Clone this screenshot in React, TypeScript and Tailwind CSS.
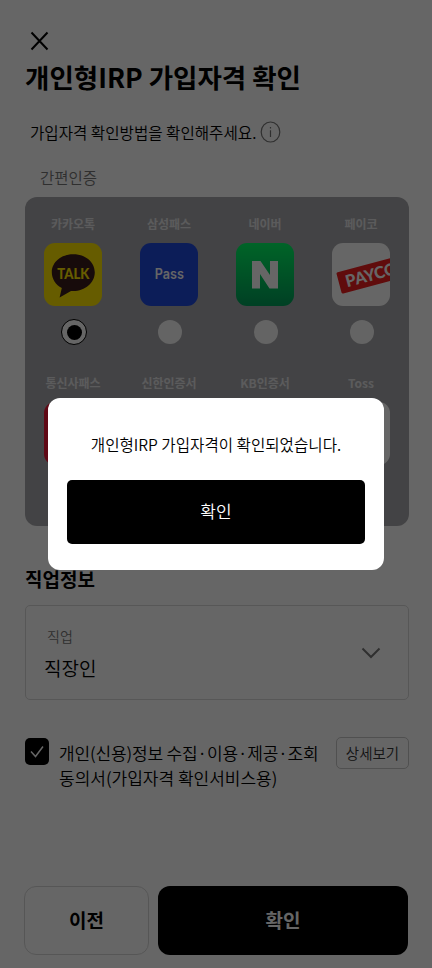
import React, { useState } from 'react';

interface Provider {
  id: string;
  label: string;
  icon: React.ReactNode;
}

const TalkIcon = () => (
  <svg viewBox="0 0 58 63" className="w-[58px] h-[63px]">
    <rect width="58" height="63" fill="#ffe600" />
    <path d="M29.2 11.2C17.3 11.2 7.8 19 7.8 29.2c0 6.700 3.900 12.600 10 15.900L15.600 54.600 27 47.900c0.800 0.100 1.500 0.100 2.200 0.100 12 0 21.600-8.300 21.600-18.800S41.200 11.200 29.200 11.200z" fill="#3b1c1c" />
    <text x="29.300" y="35.500" textAnchor="middle" textLength="32" lengthAdjust="spacingAndGlyphs" fontFamily="Lato, sans-serif" fontWeight="900" fontSize="15.500" fill="#ffe600">TALK</text>
  </svg>
);

const PassIcon = () => (
  <svg viewBox="0 0 58 63" className="w-[58px] h-[63px]">
    <rect width="58" height="63" fill="#2049dc" />
    <text x="29.300" y="36" textAnchor="middle" textLength="29" lengthAdjust="spacingAndGlyphs" fontFamily="Inter, sans-serif" fontWeight="600" fontSize="14" fill="#fff">Pass</text>
  </svg>
);

const NaverIcon = () => (
  <svg viewBox="0 0 58 63" className="w-[58px] h-[63px]">
    <defs>
      <linearGradient id="naver" x1="0" y1="0" x2="0" y2="1">
        <stop offset="0" stopColor="#00fa64" />
        <stop offset="1" stopColor="#00a05a" />
      </linearGradient>
    </defs>
    <rect width="58" height="63" fill="url(#naver)" />
    <path d="M16 18h8.500l9.500 14V18h8v27.500h-8.500L24 31v14.500h-8z" fill="#fff" />
  </svg>
);

const PaycoIcon = () => (
  <svg viewBox="0 0 58 63" className="w-[58px] h-[63px]">
    <rect width="58" height="63" fill="#fff" />
    <g transform="translate(4.200 29.600) rotate(-15)">
      <rect width="70" height="22" rx="1.500" fill="#f02020" />
      <text x="7" y="17" textLength="53" lengthAdjust="spacingAndGlyphs" fontFamily="Lato, sans-serif" fontWeight="900" fontSize="16.500" fill="#fff">PAYCO</text>
    </g>
  </svg>
);

const providers: Provider[] = [
  { id: 'kakao', label: '카카오톡', icon: <TalkIcon /> },
  { id: 'samsung', label: '삼성패스', icon: <PassIcon /> },
  { id: 'naver', label: '네이버', icon: <NaverIcon /> },
  { id: 'payco', label: '페이코', icon: <PaycoIcon /> },
  { id: 'telecom', label: '통신사패스', icon: <div className="h-full bg-[#ee1536]" /> },
  { id: 'shinhan', label: '신한인증서', icon: <div className="h-full bg-[#2049dc]" /> },
  { id: 'kb', label: 'KB인증서', icon: <div className="h-full bg-[#ffcc00]" /> },
  { id: 'toss', label: 'Toss', icon: <div className="h-full bg-white" /> },
];

const App: React.FC = () => {
  const [selected, setSelected] = useState('kakao');
  const [open, setOpen] = useState(true);

  return (
    <div className="relative w-[432px] h-[968px] overflow-hidden bg-white text-black font-[350] font-[family-name:'Noto_Sans_CJK_KR',sans-serif]">
      <main className="flex flex-col h-full pl-[25px] pr-[23px] pt-[30px]">
        <button className="ml-[5px] w-[19px] h-[22px]" aria-label="닫기">
          <svg viewBox="0 0 19 22" className="w-[19px] h-[22px]" fill="none" stroke="currentColor" strokeWidth="2">
            <path d="M1.500 2.500L17.500 19.500M17.500 2.500L1.500 19.500" />
          </svg>
        </button>
        <h1 className="mt-[7px] h-9 leading-9 text-[26.500px] font-bold whitespace-nowrap">개인형IRP 가입자격 확인</h1>

        <div className="flex items-center mt-[25px] ml-[5px] h-6">
          <p className="text-[15.600px] leading-6 whitespace-nowrap">가입자격 확인방법을 확인해주세요.</p>
          <svg viewBox="0 0 21 22" className="ml-[4px] w-[21px] h-[22px]" fill="none" stroke="#777" strokeWidth="1.200">
            <ellipse cx="10.500" cy="11" rx="9.300" ry="10" />
            <path d="M10.500 9.300v6.700M10.500 6v1.500" />
          </svg>
        </div>

        <p className="mt-[21px] ml-[15px] h-6 leading-6 text-[15.500px] text-[#777]">간편인증</p>

        <section className="grid grid-cols-4 content-start gap-y-[29px] mt-[8px] h-[329px] pt-[17px] rounded-xl bg-[#a8a8ac]">
          {providers.map((item) => (
            <div key={item.id} className="flex flex-col items-center h-[130px]">
              <span className="h-5 leading-5 text-[12px] font-bold text-[#e4e4e6] whitespace-nowrap">{item.label}</span>
              <div className="mt-[9px] w-[58px] h-[63px] shrink-0 rounded-[11px] overflow-hidden">{item.icon}</div>
              <button
                onClick={() => setSelected(item.id)}
                aria-label={item.label}
                className={`flex items-center justify-center shrink-0 rounded-full ${
                  selected === item.id ? 'w-[26px] h-[26px] mt-[13px] ml-[2px] border border-black bg-white' : 'w-[24px] h-[24px] mt-[14px] ml-[2px] bg-[#fafafa]'
                }`}
              >
                {selected === item.id && <span className="w-[15px] h-[15px] rounded-full bg-black" />}
              </button>
            </div>
          ))}
        </section>

        <h2 className="mt-[41px] h-6 leading-6 text-[19px] font-bold">직업정보</h2>

        <div className="flex items-center justify-between mt-[14px] h-[95px] pl-[18px] pr-[27px] border border-[#dadada] rounded-[5px]">
          <div className="pt-[2px]">
            <p className="h-6 leading-6 pl-[3px] text-[14px] text-[#777]">직업</p>
            <p className="mt-1 h-8 leading-8 text-[19px]">직장인</p>
          </div>
          <svg viewBox="0 0 20 12" className="w-5 h-3" fill="none" stroke="#777" strokeWidth="2">
            <path d="M1.500 1.500L10 10l8.500-8.500" />
          </svg>
        </div>

        <div className="flex items-start mt-[37px]">
          <span className="flex items-center justify-center mt-px w-6 h-[27px] rounded-[5px] bg-black">
            <svg viewBox="0 0 14 13" className="w-[14px] h-[13px]" fill="none" stroke="#fff" strokeWidth="1.500">
              <path d="M1 6.500l4.500 5L13 1.500" />
            </svg>
          </span>
          <p className="ml-[10px] mt-[3px] text-[17px] leading-[25px] whitespace-nowrap">
            <span className="tracking-[-0.14px]">개인(신용)정보 수집·이용·제공·조회</span>
            <br />
            동의서(가입자격 확인서비스용)
          </p>
          <button className="ml-auto w-[73px] h-8 rounded-[5px] border border-[#c8c8c8] text-[14.500px] leading-[30px] whitespace-nowrap text-[#333]">상세보기</button>
        </div>

        <div className="flex gap-[9px] mt-auto mb-[13px] -ml-px mr-px">
          <button className="w-[125px] h-[69px] rounded-xl border border-[#d8d8d8] text-[19px] font-bold">이전</button>
          <button className="flex-1 h-[69px] rounded-xl bg-black text-white text-[19px] font-bold">확인</button>
        </div>
      </main>

      {open && (
        <div className="absolute inset-0 flex flex-col items-center bg-black/60 pt-[398px]">
          <div className="flex flex-col w-[336px] h-[172px] px-[19px] pt-[34px] rounded-xl bg-white">
            <p className="h-6 leading-6 text-[15.600px] text-center whitespace-nowrap">개인형IRP 가입자격이 확인되었습니다.</p>
            <button onClick={() => setOpen(false)} className="mt-6 h-16 pb-[2px] rounded-[5px] bg-black text-white text-[17px]">
              확인
            </button>
          </div>
        </div>
      )}
    </div>
  );
};

export default App;
